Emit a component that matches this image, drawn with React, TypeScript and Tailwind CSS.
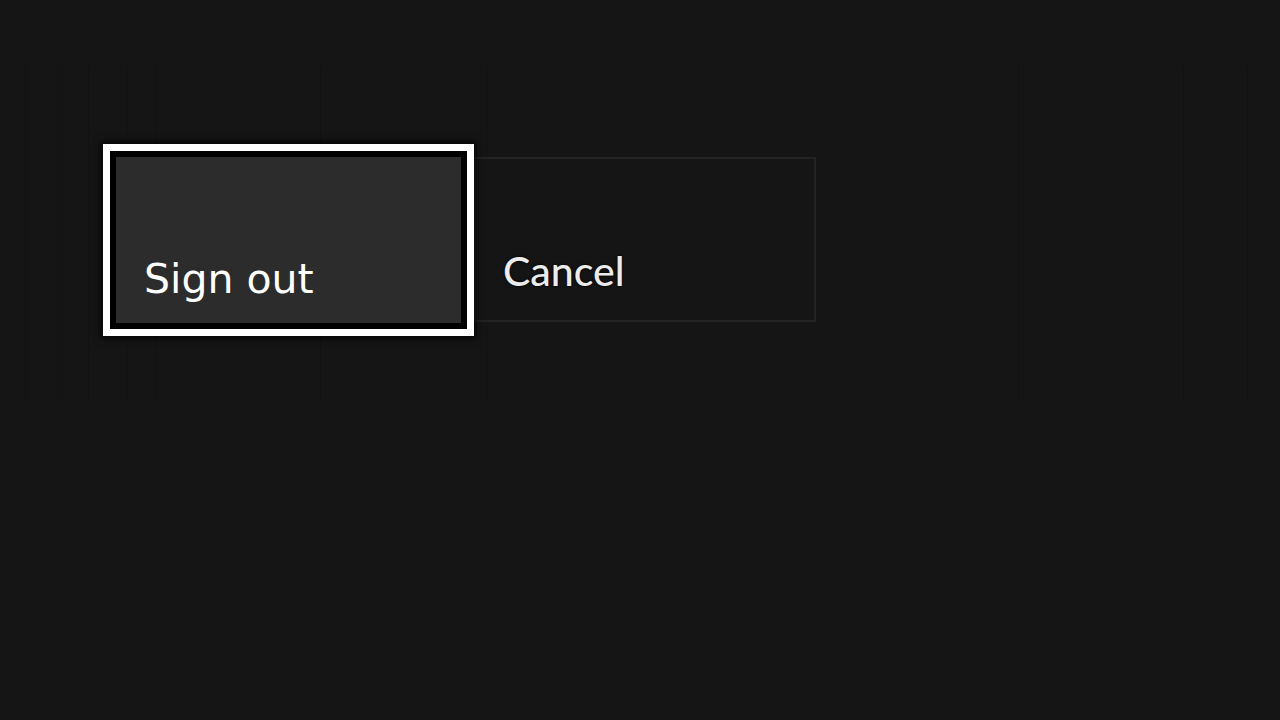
import React from "react";

export default function App() {
  return (
    <div className="grid h-[720px] w-[1280px] overflow-hidden bg-[#151515]">
      {/* faint background column edges */}
      <div className="col-start-1 row-start-1 mt-[65px] flex h-[335px]">
        <div className="w-[25px]" />
        <div className="w-[37px] border-l border-[#121212]" />
        <div className="w-[26px] border-l border-[#131313]" />
        <div className="w-[39px] border-l border-[#121212]" />
        <div className="w-[28px] border-l border-[#131313]" />
        <div className="w-[165px] border-l border-[#121212]" />
        <div className="w-[167px] border-l border-[#121212]" />
        <div className="w-[531px] border-l border-[#131313]" />
        <div className="w-[165px] border-l border-[#121212]" />
        <div className="w-[64px] border-l border-[#121212]" />
        <div className="w-[33px] border-l border-[#121212]" />
      </div>
      <div className="col-start-1 row-start-1 flex items-start pl-[103px] pt-[144px]">
        <div className="relative z-10 h-[192px] w-[371px] border-[7px] border-white bg-black p-[6px] shadow-[0_0_6px_3px_rgba(0,0,0,0.7)]">
          <div className="flex h-full w-full items-end bg-[#2c2c2c] pb-[23px] pl-[28px]">
            <span className="text-[41px] leading-[41px] text-white [font-family:'DejaVu_Sans',sans-serif]">
              Sign out
            </span>
          </div>
        </div>
        <div className="mt-[13px] flex h-[165px] w-[342px] items-end border-2 border-[#232323] bg-[#151515] pb-[29px] pl-[27px]">
          <span className="text-[41px] font-medium leading-[41px] text-[#ececec] [font-family:Lato,sans-serif] [text-shadow:0_0_3px_#000,0_0_1px_#000]">
            Cancel
          </span>
        </div>
      </div>
    </div>
  );
}
